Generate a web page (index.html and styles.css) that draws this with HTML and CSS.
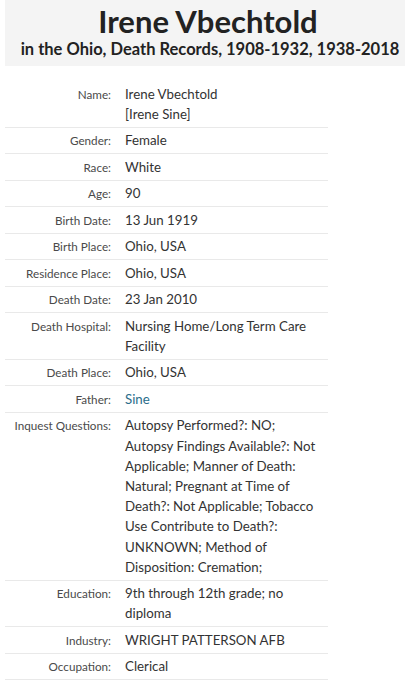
FILE: index.html
```html
<!DOCTYPE html>
<html>
<head>
<meta charset="utf-8">
<link rel="stylesheet" href="styles.css">
</head>
<body>
<header class="page-head">
  <h1 class="title">Irene Vbechtold</h1>
  <h2 class="subtitle">in the Ohio, Death Records, 1908-1932, 1938-2018</h2>
</header>
<table class="record">
  <tbody>
    <tr><th>Name:</th><td>Irene Vbechtold<br>[Irene Sine]</td></tr>
    <tr><th>Gender:</th><td>Female</td></tr>
    <tr><th>Race:</th><td>White</td></tr>
    <tr><th>Age:</th><td>90</td></tr>
    <tr><th>Birth Date:</th><td>13 Jun 1919</td></tr>
    <tr><th>Birth Place:</th><td>Ohio, USA</td></tr>
    <tr><th>Residence Place:</th><td>Ohio, USA</td></tr>
    <tr><th>Death Date:</th><td>23 Jan 2010</td></tr>
    <tr><th>Death Hospital:</th><td>Nursing Home/Long Term Care<br>Facility</td></tr>
    <tr><th>Death Place:</th><td>Ohio, USA</td></tr>
    <tr><th>Father:</th><td><a class="link" href="#">Sine</a></td></tr>
    <tr><th>Inquest Questions:</th><td>Autopsy Performed?: NO;<br>Autopsy Findings Available?: Not<br>Applicable; Manner of Death:<br>Natural; Pregnant at Time of<br>Death?: Not Applicable; Tobacco<br>Use Contribute to Death?:<br>UNKNOWN; Method of<br>Disposition: Cremation;</td></tr>
    <tr><th>Education:</th><td>9th through 12th grade; no<br>diploma</td></tr>
    <tr><th>Industry:</th><td>WRIGHT PATTERSON AFB</td></tr>
    <tr><th>Occupation:</th><td>Clerical</td></tr>
  </tbody>
</table>
</body>
</html>
```
FILE: styles.css
```css
html, body {
  margin: 0;
  padding: 0;
  background: #fff;
}
body {
  font-family: Lato, "Open Sans", sans-serif;
  color: #333;
}
.page-head {
  margin: 0 4px 0 5px;
  background: #f4f4f4;
  height: 66px;
  box-sizing: border-box;
  padding-top: 4px;
  text-align: center;
}
.title {
  margin: 0;
  padding-left: 6px;
  font-size: 31px;
  line-height: 35px;
  font-weight: 700;
  color: #222;
}
.subtitle {
  margin: 0;
  padding-left: 10px;
  font-size: 16.5px;
  line-height: 20px;
  font-weight: 700;
  color: #222;
  white-space: nowrap;
}
.record {
  margin: 15px 0 0 5px;
  width: 323px;
  border-collapse: collapse;
}
.record th,
.record td {
  vertical-align: top;
  line-height: 20.2px;
  padding: 2.65px 0;
  border-bottom: 1px solid #e9e9e9;
}
.record th {
  width: 106px;
  padding-right: 14px;
  text-align: right;
  font-weight: 400;
  font-size: 11.7px;
  color: #4a4a4a;
  white-space: nowrap;
}
.record td {
  font-size: 13.3px;
  color: #333;
}
.link {
  color: #2a6d8b;
  text-decoration: none;
}
```
